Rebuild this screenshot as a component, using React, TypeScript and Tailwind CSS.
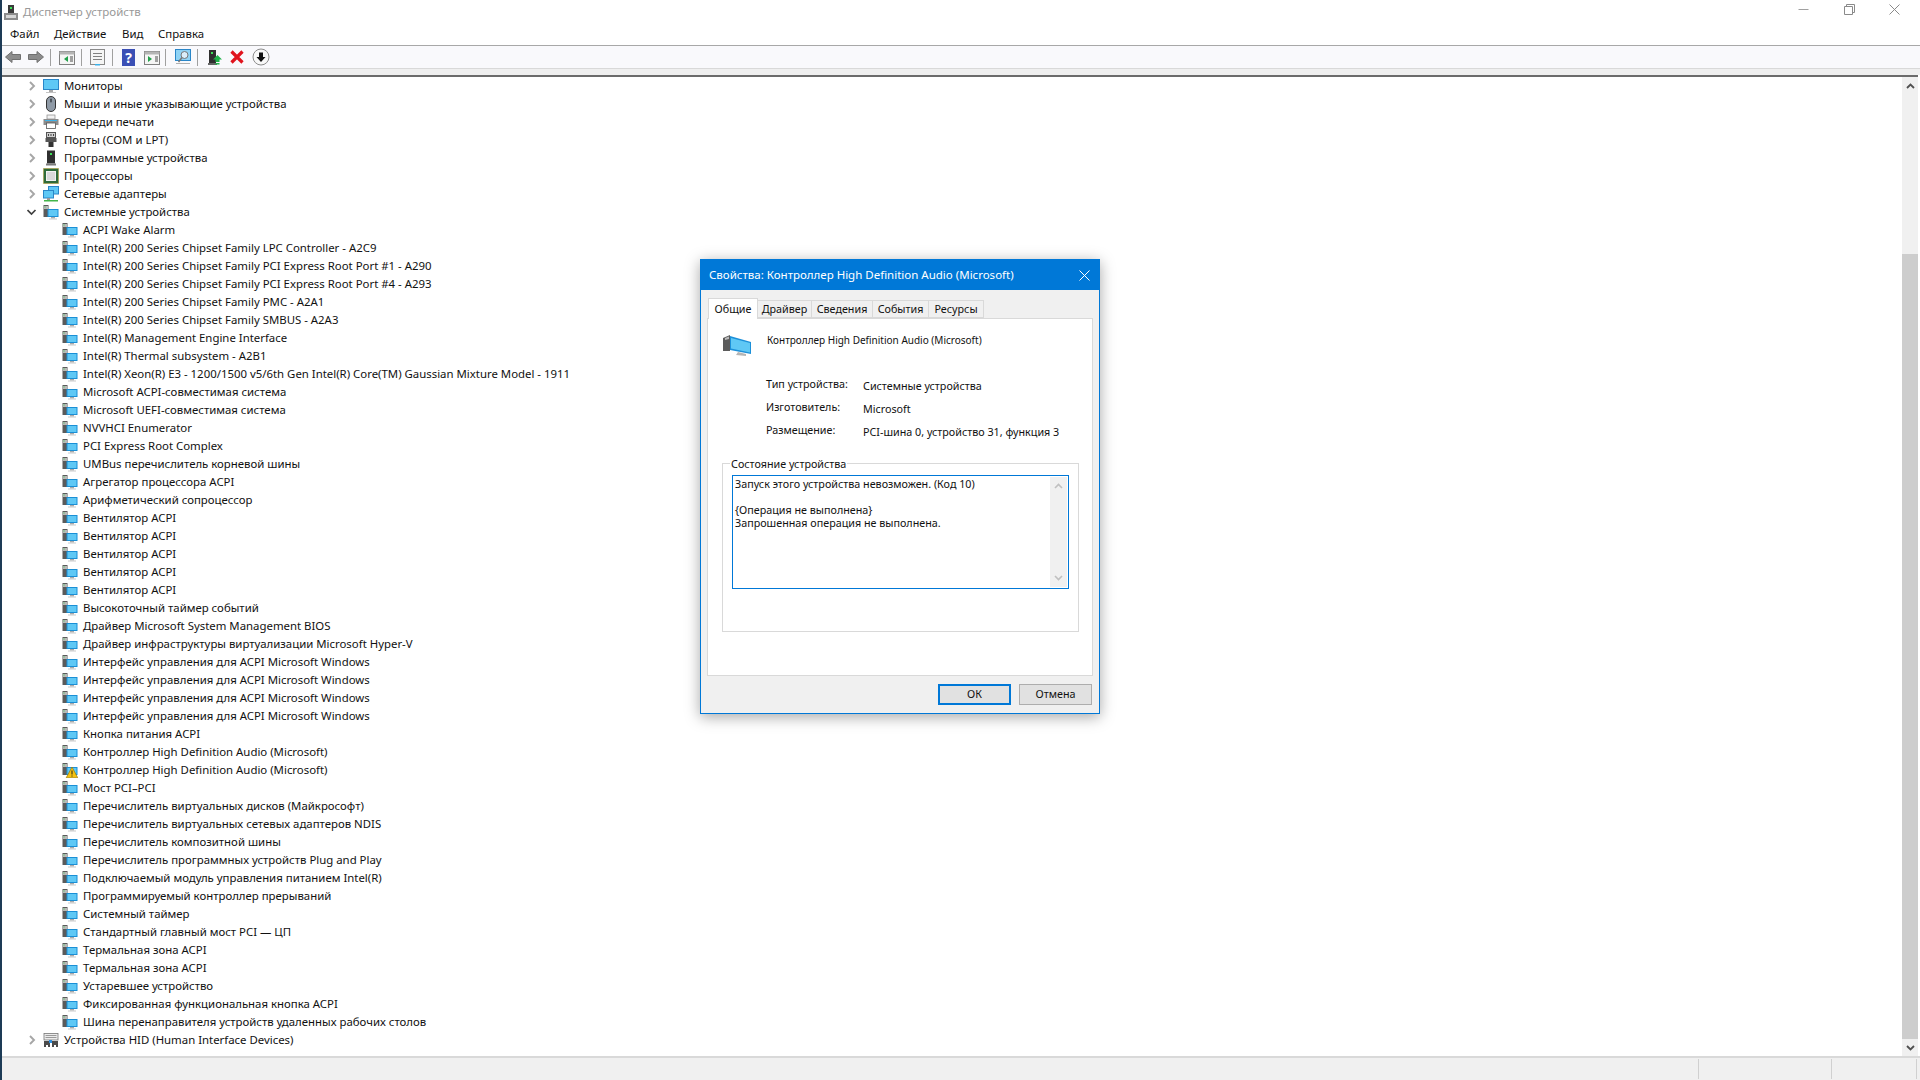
import React from "react";

const font = "font-['Noto_Sans','Open_Sans',sans-serif]";

const SystemIcon = ({ warn = false }: { warn?: boolean }) => (
  <svg width="16" height="16" viewBox="0 0 16 16" className="shrink-0">
    <rect x="0.5" y="1" width="5" height="12" fill="#5b5b5b" />
    <rect x="1" y="2" width="4" height="3" fill="#b9b9b9" />
    <rect x="1.5" y="2.5" width="1" height="1" fill="#35d04b" />
    <rect x="4.5" y="5" width="11" height="8" fill="#1a8fd6" />
    <rect x="5.5" y="6" width="9" height="6" fill="#5fc8f5" />
    <rect x="8" y="13" width="4" height="1.5" fill="#a9a9a9" />
    <rect x="6" y="14.5" width="8" height="1" fill="#c9c9c9" />
    {warn && (
      <>
        <path d="M10 5 L15.8 15.8 L4.2 15.8 Z" fill="#f5c211" stroke="#8a6a00" strokeWidth="0.6" />
        <rect x="9.5" y="8.5" width="1" height="4" fill="#222" />
        <rect x="9.5" y="13.5" width="1" height="1" fill="#222" />
      </>
    )}
  </svg>
);

const MonitorIcon = () => (
  <svg width="16" height="16" viewBox="0 0 16 16">
    <rect x="0.5" y="1.5" width="15" height="10" fill="#5fc8f5" stroke="#2a86c8" />
    <rect x="6" y="12" width="4" height="2" fill="#a9a9a9" />
    <rect x="3" y="14" width="10" height="1" fill="#c4c4c4" />
  </svg>
);

const MouseIcon = () => (
  <svg width="16" height="16" viewBox="0 0 16 16">
    <rect x="3.5" y="0.5" width="9" height="15" rx="4.5" fill="#8f9aa6" stroke="#333" />
    <rect x="7.2" y="2.5" width="1.6" height="4" rx="0.8" fill="#40464d" />
  </svg>
);

const PrinterIcon = () => (
  <svg width="16" height="16" viewBox="0 0 16 16">
    <rect x="4" y="1" width="8" height="4" fill="#f2f2f2" stroke="#888" strokeWidth="0.7" />
    <rect x="0.5" y="5" width="15" height="6" fill="#8c8c8c" />
    <rect x="2" y="6" width="12" height="1" fill="#3db1e8" />
    <rect x="3.5" y="9" width="9" height="5.5" fill="#ffffff" stroke="#555" strokeWidth="0.8" />
  </svg>
);

const PortIcon = () => (
  <svg width="16" height="16" viewBox="0 0 16 16">
    <rect x="3.5" y="0.5" width="9" height="5" fill="#d0d0d0" stroke="#555" />
    <rect x="5" y="2" width="1" height="2" fill="#444" />
    <rect x="7.5" y="2" width="1" height="2" fill="#444" />
    <rect x="10" y="2" width="1" height="2" fill="#444" />
    <rect x="2.5" y="6" width="11" height="4" fill="#555" />
    <rect x="5.5" y="10" width="5" height="5" fill="#333" />
  </svg>
);

const SoftIcon = () => (
  <svg width="16" height="16" viewBox="0 0 16 16">
    <rect x="4" y="0.5" width="8" height="13" fill="#2f2f2f" />
    <rect x="7" y="3" width="2" height="2" fill="#3fe05a" />
    <rect x="3" y="13.5" width="10" height="2" fill="#7a7a7a" />
  </svg>
);

const CpuIcon = () => (
  <svg width="16" height="16" viewBox="0 0 16 16">
    <rect x="0.5" y="0.5" width="15" height="15" fill="#2f6b3a" stroke="#b59a2e" strokeDasharray="1 1" />
    <rect x="3.5" y="3.5" width="9" height="9" fill="#d9d9d9" stroke="#f2f2f2" />
  </svg>
);

const NetIcon = () => (
  <svg width="16" height="16" viewBox="0 0 16 16">
    <rect x="5.5" y="0.5" width="10" height="7.5" fill="#5fc8f5" stroke="#2a86c8" />
    <rect x="0.5" y="4.5" width="10" height="7.5" fill="#5fc8f5" stroke="#2a86c8" />
    <rect x="4" y="12" width="3" height="2" fill="#9a9a9a" />
    <rect x="1" y="14" width="14" height="1.5" fill="#43b54a" />
  </svg>
);

const HidIcon = () => (
  <svg width="16" height="16" viewBox="0 0 16 16">
    <rect x="1" y="1.5" width="14" height="6.5" fill="#ececec" stroke="#777" strokeWidth="0.8" />
    <rect x="2.5" y="3" width="11" height="1" fill="#9a9a9a" />
    <rect x="2.5" y="5" width="11" height="1" fill="#9a9a9a" />
    <path d="M1 9h6v6H5v-2H3v2H1z" fill="#4b4b4b" />
    <path d="M9 9h6v6h-2v-2h-2v2H9z" fill="#4b4b4b" />
    <rect x="6" y="8" width="3" height="3" fill="#2c8fe0" />
  </svg>
);

const Chevron = ({ open = false }: { open?: boolean }) => (
  <svg width="10" height="10" viewBox="0 0 10 10" className="shrink-0">
    {open ? (
      <path d="M0.5 3 L4.5 7 L8.5 3" fill="none" stroke="#404040" strokeWidth="1.7" />
    ) : (
      <path d="M3 1 L7 5 L3 9" fill="none" stroke="#a6a6a6" strokeWidth="1.9" />
    )}
  </svg>
);

const topGroups: [string, React.ReactNode][] = [
  ["Мониторы", <MonitorIcon />],
  ["Мыши и иные указывающие устройства", <MouseIcon />],
  ["Очереди печати", <PrinterIcon />],
  ["Порты (COM и LPT)", <PortIcon />],
  ["Программные устройства", <SoftIcon />],
  ["Процессоры", <CpuIcon />],
  ["Сетевые адаптеры", <NetIcon />],
];

const systemDevices = [
  "ACPI Wake Alarm",
  "Intel(R) 200 Series Chipset Family LPC Controller - A2C9",
  "Intel(R) 200 Series Chipset Family PCI Express Root Port #1 - A290",
  "Intel(R) 200 Series Chipset Family PCI Express Root Port #4 - A293",
  "Intel(R) 200 Series Chipset Family PMC - A2A1",
  "Intel(R) 200 Series Chipset Family SMBUS - A2A3",
  "Intel(R) Management Engine Interface",
  "Intel(R) Thermal subsystem - A2B1",
  "Intel(R) Xeon(R) E3 - 1200/1500 v5/6th Gen Intel(R) Core(TM) Gaussian Mixture Model - 1911",
  "Microsoft ACPI-совместимая система",
  "Microsoft UEFI-совместимая система",
  "NVVHCI Enumerator",
  "PCI Express Root Complex",
  "UMBus перечислитель корневой шины",
  "Агрегатор процессора ACPI",
  "Арифметический сопроцессор",
  "Вентилятор ACPI",
  "Вентилятор ACPI",
  "Вентилятор ACPI",
  "Вентилятор ACPI",
  "Вентилятор ACPI",
  "Высокоточный таймер событий",
  "Драйвер Microsoft System Management BIOS",
  "Драйвер инфраструктуры виртуализации Microsoft Hyper-V",
  "Интерфейс управления для ACPI Microsoft Windows",
  "Интерфейс управления для ACPI Microsoft Windows",
  "Интерфейс управления для ACPI Microsoft Windows",
  "Интерфейс управления для ACPI Microsoft Windows",
  "Кнопка питания ACPI",
  "Контроллер High Definition Audio (Microsoft)",
  "Контроллер High Definition Audio (Microsoft)",
  "Мост PCI–PCI",
  "Перечислитель виртуальных дисков (Майкрософт)",
  "Перечислитель виртуальных сетевых адаптеров NDIS",
  "Перечислитель композитной шины",
  "Перечислитель программных устройств Plug and Play",
  "Подключаемый модуль управления питанием Intel(R)",
  "Программируемый контроллер прерываний",
  "Системный таймер",
  "Стандартный главный мост PCI — ЦП",
  "Термальная зона ACPI",
  "Термальная зона ACPI",
  "Устаревшее устройство",
  "Фиксированная функциональная кнопка ACPI",
  "Шина перенаправителя устройств удаленных рабочих столов",
];

const GroupRow = ({ label, icon, open = false }: { label: string; icon: React.ReactNode; open?: boolean }) => (
  <div className="flex items-center h-[18px] pl-[25px] whitespace-nowrap">
    <Chevron open={open} />
    <span className="ml-[6px] w-4 h-4 shrink-0">{icon}</span>
    <span className="ml-[5px]">{label}</span>
  </div>
);

const Toolbar = () => (
  <div className="flex items-center h-[22px] pl-[3px] bg-[#f9f9fc]">
    <svg width="16" height="16" viewBox="0 0 16 16">
      <path d="M0.5 8 L7 2.5 V5.5 H15.5 V10.5 H7 V13.5 Z" fill="#8c8c8c" stroke="#707070" />
    </svg>
    <svg width="16" height="16" viewBox="0 0 16 16" className="ml-[7px]">
      <path d="M15.5 8 L9 2.5 V5.5 H0.5 V10.5 H9 V13.5 Z" fill="#8c8c8c" stroke="#707070" />
    </svg>
    <div className="w-px h-[17px] bg-[#a0a0a0] ml-[6px]" />
    <svg width="16" height="15" viewBox="0 0 16 15" className="ml-[8px]">
      <rect x="0.5" y="1.5" width="15" height="13" fill="#f5f5f5" stroke="#808080" />
      <rect x="0.5" y="1.5" width="15" height="3" fill="#b4b4b4" />
      <path d="M9 6 V12 L5 9 Z" fill="#21a04a" />
      <rect x="11" y="6" width="3" height="6" fill="#a0a0a0" />
    </svg>
    <div className="w-px h-[17px] bg-[#a0a0a0] ml-[6px]" />
    <svg width="15" height="17" viewBox="0 0 15 17" className="ml-[8px]">
      <rect x="0.5" y="0.5" width="14" height="15" fill="#f5f5f5" stroke="#8a8a8a" />
      <rect x="3" y="4" width="9" height="1" fill="#808080" />
      <rect x="3" y="7" width="9" height="1" fill="#808080" />
      <rect x="3" y="10" width="9" height="1" fill="#808080" />
      <rect x="5" y="15" width="5" height="1.5" fill="#3db1e8" />
    </svg>
    <div className="w-px h-[17px] bg-[#a0a0a0] ml-[7px]" />
    <div className="w-[13px] h-[17px] ml-[9px] bg-[#3a4fb5] text-white text-[14px] leading-[17px] font-bold text-center">?</div>
    <svg width="16" height="15" viewBox="0 0 16 15" className="ml-[9px]">
      <rect x="0.5" y="1.5" width="15" height="13" fill="#f5f5f5" stroke="#808080" />
      <rect x="0.5" y="1.5" width="15" height="3" fill="#b4b4b4" />
      <path d="M4 6 V12 L8 9 Z" fill="#21a04a" />
      <rect x="11" y="6" width="3" height="6" fill="#a0a0a0" />
    </svg>
    <div className="w-px h-[17px] bg-[#a0a0a0] ml-[5px]" />
    <svg width="16" height="16" viewBox="0 0 16 16" className="ml-[9px]">
      <rect x="0.5" y="0.5" width="15" height="11" fill="#8fd3f5" stroke="#2a86c8" />
      <circle cx="9.5" cy="6" r="3.5" fill="#dbeef9" stroke="#777" />
      <path d="M7 8.5 L3.5 13" stroke="#777" strokeWidth="1.5" />
      <rect x="1" y="14" width="14" height="1" fill="#b0b0b0" />
    </svg>
    <div className="w-px h-[17px] bg-[#a0a0a0] ml-[6px]" />
    <svg width="14" height="17" viewBox="0 0 14 17" className="ml-[10px]">
      <rect x="1" y="1" width="7" height="13" fill="#2f2f2f" />
      <rect x="3" y="3" width="2" height="2" fill="#3fe05a" />
      <rect x="0" y="14" width="9" height="2" fill="#666" />
      <path d="M9.5 6 L14 10.5 H11.5 V13 H7.5 V10.5 H5 Z" fill="#21b24a" />
      <rect x="7.5" y="14" width="4" height="1.5" fill="#21b24a" />
    </svg>
    <svg width="14" height="14" viewBox="0 0 14 14" className="ml-[8px]">
      <path d="M1.5 1.5 L12.5 12.5 M12.5 1.5 L1.5 12.5" stroke="#e0141e" strokeWidth="3.2" />
    </svg>
    <svg width="18" height="18" viewBox="0 0 18 18" className="ml-[8px]">
      <circle cx="9" cy="9" r="8" fill="#f8f8f8" stroke="#8c8c8c" />
      <path d="M9 14 L4.5 9 H7 V4.5 H11 V9 H13.5 Z" fill="#111" />
    </svg>
  </div>
);

const Dialog = () => (
  <div className="absolute left-[698px] top-[259px] w-[400px] h-[455px] flex flex-col border border-[#0078d7] bg-[#f0f0f0] shadow-[0_3px_14px_rgba(0,0,0,0.35)] text-[10.75px] text-[#111]">
    <div className="flex items-center justify-between h-[30px] shrink-0 pl-2 pr-[9px] bg-[#0078d7] text-white">
      <span className="text-[11.5px]">Свойства: Контроллер High Definition Audio (Microsoft)</span>
      <svg width="11" height="11" viewBox="0 0 11 11">
        <path d="M0.5 0.5 L10.5 10.5 M10.5 0.5 L0.5 10.5" stroke="#fff" strokeWidth="1" />
      </svg>
    </div>

    <div className="flex items-end h-[28px] shrink-0 pl-[7px]">
      <div className="flex items-center justify-center w-[50px] h-[21px] -mb-px z-10 bg-white border border-b-0 border-[#d9d9d9]">Общие</div>
      <div className="flex items-center justify-center w-[54px] h-[18px] bg-[#f0f0f0] border border-[#d9d9d9] border-l-0">Драйвер</div>
      <div className="flex items-center justify-center w-[61px] h-[18px] bg-[#f0f0f0] border border-[#d9d9d9] border-l-0">Сведения</div>
      <div className="flex items-center justify-center w-[56px] h-[18px] bg-[#f0f0f0] border border-[#d9d9d9] border-l-0">События</div>
      <div className="flex items-center justify-center w-[55px] h-[18px] bg-[#f0f0f0] border border-[#d9d9d9] border-l-0">Ресурсы</div>
    </div>

    <div className="mx-[6px] h-[358px] shrink-0 bg-white border border-[#d9d9d9] pt-[14px] pl-[14px] pr-[13px]">
      <div className="flex h-[25px]">
        <svg width="30" height="24" viewBox="0 0 30 24" className="shrink-0">
          <path d="M1 5 L8 2 V18 L1 18 Z" fill="#5c5c5c" />
          <path d="M3 5 L7 3.5 V6 L3 7 Z" fill="#bcbcbc" />
          <path d="M8 3 L29 9 V21 L8 17 Z" fill="#1c90d9" />
          <path d="M9 5 L28 10 V19.5 L9 15.5 Z" fill="#5fc8f5" />
          <path d="M16 19 L24 21 V23 L14 22 Z" fill="#b5b5b5" />
        </svg>
        <span className="ml-[15px] text-[10px]">Контроллер High Definition Audio (Microsoft)</span>
      </div>

      <div className="mt-[18px] ml-[44px] grid grid-cols-[97px_1fr] auto-rows-[23px]">
        <span>Тип устройства:</span>
        <span className="mt-[2px]">Системные устройства</span>
        <span>Изготовитель:</span>
        <span className="mt-[2px]">Microsoft</span>
        <span>Размещение:</span>
        <span className="mt-[2px]">PCI-шина 0, устройство 31, функция 3</span>
      </div>

      <div className="relative mt-[18px] h-[169px] border border-[#d9d9d9] px-[9px] pt-[11px]">
        <span className="absolute left-[7px] -top-[8px] px-px bg-white">Состояние устройства</span>
        <div className="flex h-[114px] border border-[#0078d7]">
          <div className="flex-1 pl-[2px] pt-[2px] leading-[13px]">
            <p>Запуск этого устройства невозможен. (Код 10)</p>
            <p className="mt-[13px]">{"{Операция не выполнена}"}</p>
            <p>Запрошенная операция не выполнена.</p>
          </div>
          <div className="flex flex-col justify-between items-center w-[17px] my-px mr-px py-[6px] bg-[#f0f0f0]">
            <svg width="9" height="6" viewBox="0 0 9 6"><path d="M1 5 L4.5 1.5 L8 5" fill="none" stroke="#c0c0c0" strokeWidth="1.6" /></svg>
            <svg width="9" height="6" viewBox="0 0 9 6"><path d="M1 1 L4.5 4.5 L8 1" fill="none" stroke="#c0c0c0" strokeWidth="1.6" /></svg>
          </div>
        </div>
      </div>
    </div>

    <div className="flex justify-end gap-2 pt-[8px] pr-[7px]">
      <div className="flex items-center justify-center w-[73px] h-[21px] bg-[#e1e1e1] border-2 border-[#0078d7]">ОК</div>
      <div className="flex items-center justify-center w-[73px] h-[21px] bg-[#e1e1e1] border border-[#adadad]">Отмена</div>
    </div>
  </div>
);

export default function App() {
  return (
    <div className={`relative flex flex-col w-[1920px] h-[1080px] overflow-hidden bg-white border-l-2 border-[#1d3b56] text-[11.4px] text-[#111] ${font}`}>
      {/* title bar */}
      <div className="flex items-center justify-between h-[24px] shrink-0 pl-[1px] bg-white">
        <div className="flex items-center">
          <svg width="16" height="17" viewBox="0 0 16 17">
            <rect x="5" y="1" width="6" height="9" fill="#3a3a3a" />
            <rect x="7" y="3" width="2" height="2" fill="#3fe05a" />
            <rect x="1" y="9" width="14" height="7" fill="#8c8c8c" />
            <rect x="3" y="11" width="10" height="3" fill="#d6d6d6" />
          </svg>
          <span className="ml-[4px] text-[11.5px] text-[#999999]">Диспетчер устройств</span>
        </div>
        <div className="flex items-center -mt-[5px]">
          <svg width="11" height="11" viewBox="0 0 11 11" className="mr-[35px]"><path d="M0.5 5.5 H10.5" stroke="#a0a0a0" /></svg>
          <svg width="11" height="11" viewBox="0 0 11 11" className="mr-[34px]"><path d="M0.5 2.5 H8.5 V10.5 H0.5 Z M2.5 2.5 V0.5 H10.5 V8.5 H8.5" fill="none" stroke="#8a8a8a" /></svg>
          <svg width="11" height="11" viewBox="0 0 11 11" className="mr-[20px]"><path d="M0.5 0.5 L10.5 10.5 M10.5 0.5 L0.5 10.5" stroke="#8a8a8a" /></svg>
        </div>
      </div>

      {/* menu */}
      <div className="flex items-center h-[21px] shrink-0 pl-[8px] border-b border-[#a8a8a8] -mt-[1px] box-content pb-[1px]">
        <span className="w-[44px]">Файл</span>
        <span className="w-[68px]">Действие</span>
        <span className="w-[36px]">Вид</span>
        <span>Справка</span>
      </div>

      <Toolbar />
      <div className="h-[7px] shrink-0 bg-[#efefef] border-t border-[#d9d9d9]" />

      {/* device tree */}
      <div className="flex h-[981px] shrink-0 border-t-2 border-[#6b6b6b] mr-[2px]">
        <div className="flex-1 overflow-hidden">
          {topGroups.map(([label, icon]) => (
            <GroupRow key={label} label={label} icon={icon} />
          ))}
          <GroupRow label="Системные устройства" icon={<SystemIcon />} open />
          {systemDevices.map((name, i) => (
            <div key={i} className="flex items-center h-[18px] pl-[60px] whitespace-nowrap">
              <SystemIcon warn={i === 30} />
              <span className="ml-[5px]">{name}</span>
            </div>
          ))}
          <GroupRow label="Устройства HID (Human Interface Devices)" icon={<HidIcon />} />
        </div>
        <div className="flex flex-col w-[16px] shrink-0 bg-[#f0f0f0]">
          <div className="flex items-center justify-center h-[17px] shrink-0">
            <svg width="9" height="6" viewBox="0 0 9 6"><path d="M1 5 L4.5 1.5 L8 5" fill="none" stroke="#505050" strokeWidth="1.8" /></svg>
          </div>
          <div className="h-[160px] shrink-0" />
          <div className="flex-1 bg-[#cdcdcd]" />
          <div className="flex items-center justify-center h-[17px] shrink-0">
            <svg width="9" height="6" viewBox="0 0 9 6"><path d="M1 1 L4.5 4.5 L8 1" fill="none" stroke="#505050" strokeWidth="1.8" /></svg>
          </div>
        </div>
      </div>

      {/* status bar */}
      <div className="flex flex-1 bg-[#f0f0f0] border-t-2 border-[#d9d9d9] pt-px pb-px">
        <div className="w-[1697px] border-r border-[#d0d0d0]" />
        <div className="w-[133px] border-r border-[#d0d0d0]" />
        <div className="w-[85px] border-r border-[#d0d0d0]" />
      </div>

      <Dialog />
    </div>
  );
}
